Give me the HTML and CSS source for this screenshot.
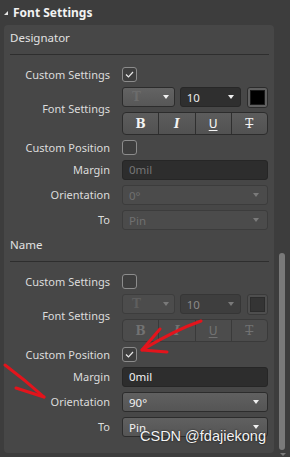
FILE: index.html
```html
<!DOCTYPE html>
<html lang="en">
<head>
  <meta charset="UTF-8" />
  <title>Font Settings</title>
  <link rel="stylesheet" href="styles.css">
</head>
<body>
  <div class="header">
    <span class="caret"></span>
    <span class="header-title">Font Settings</span>
  </div>

  <div class="main">
    <div class="panel">

      <div class="section">
        <div class="section-title">Designator</div>
        <div class="sep"></div>
        <div class="grid">
          <div class="label">Custom Settings</div>
          <div class="ctl"><span class="check"><svg width="9" height="7" viewBox="0 0 9 7"><polyline points="1,3.5 3.5,6 8,1" fill="none" stroke="#e8e8e8" stroke-width="1.2"/></svg></span></div>

          <div class="label span2">Font Settings</div>
          <div class="ctl font-row">
            <div class="dd font-dd"><span class="t-glyph">T</span><span class="arrow"></span></div>
            <div class="dd size-dd"><span>10</span><span class="arrow"></span></div>
            <div class="color-box"><span class="swatch"></span></div>
          </div>
          <div class="ctl biut">
            <span class="seg b">B</span>
            <span class="seg i">I</span>
            <span class="seg u">U</span>
            <span class="seg s">T</span>
          </div>

          <div class="label">Custom Position</div>
          <div class="ctl"><span class="check"></span></div>

          <div class="label">Margin</div>
          <div class="ctl"><div class="input muted">0mil</div></div>

          <div class="label">Orientation</div>
          <div class="ctl"><div class="select disabled"><span>0°</span><span class="arrow"></span></div></div>

          <div class="label">To</div>
          <div class="ctl"><div class="select disabled"><span>Pin</span><span class="arrow"></span></div></div>
        </div>
      </div>

      <div class="section">
        <div class="section-title">Name</div>
        <div class="sep"></div>
        <div class="grid">
          <div class="label">Custom Settings</div>
          <div class="ctl"><span class="check"></span></div>

          <div class="label span2">Font Settings</div>
          <div class="ctl font-row off">
            <div class="dd font-dd"><span class="t-glyph">T</span><span class="arrow"></span></div>
            <div class="dd size-dd"><span>10</span><span class="arrow"></span></div>
            <div class="color-box"><span class="swatch"></span></div>
          </div>
          <div class="ctl biut off">
            <span class="seg b">B</span>
            <span class="seg i">I</span>
            <span class="seg u">U</span>
            <span class="seg s">T</span>
          </div>

          <div class="label">Custom Position</div>
          <div class="ctl"><span class="check"><svg width="9" height="7" viewBox="0 0 9 7"><polyline points="1,3.5 3.5,6 8,1" fill="none" stroke="#e8e8e8" stroke-width="1.2"/></svg></span></div>

          <div class="label">Margin</div>
          <div class="ctl"><div class="input">0mil</div></div>

          <div class="label">Orientation</div>
          <div class="ctl"><div class="select"><span>90°</span><span class="arrow"></span></div></div>

          <div class="label">To</div>
          <div class="ctl"><div class="select"><span>Pin</span><span class="arrow"></span></div></div>
        </div>
      </div>

    </div>

    <div class="scrollbar">
      <div class="thumb"></div>
      <div class="scroll-arrow"></div>
    </div>
  </div>

  <!-- hand-drawn annotations -->
  <svg class="marks" width="290" height="457" viewBox="0 0 290 457">
    <g fill="none" stroke="#e3141c" stroke-width="3" stroke-linecap="round" stroke-linejoin="round">
      <path d="M201 321 Q175 330 142 350"/>
      <path d="M160 329 L142 350 L167 352"/>
      <path d="M5 365 Q25 380 44 397"/>
      <path d="M16 388 L44 397"/>
    </g>
  </svg>
  <div class="watermark">CSDN @fdajiekong</div>
</body>
</html>
```

FILE: styles.css
```css
* { box-sizing: border-box; }

body {
  margin: 0;
  width: 290px;
  height: 457px;
  overflow: hidden;
  background: #3d3d3d;
  color: #dcdcdc;
  font-family: "Noto Sans", sans-serif;
  font-size: 11px;
  position: relative;
}

.header {
  height: 25px;
  display: flex;
  align-items: center;
  padding-left: 4px;
  gap: 5px;
}

.caret {
  width: 0;
  height: 0;
  border-left: 4px solid transparent;
  border-bottom: 4px solid #e6e6e6;
  margin-top: 1px;
}

.header-title {
  font-weight: bold;
  font-size: 12px;
  color: #f2f2f2;
}

.main {
  display: flex;
}

.panel {
  margin-left: 4px;
  width: 270px;
  height: 428px;
  background: #474747;
  border-radius: 4px;
  padding: 5px 5px 0 6px;
}

.section + .section { margin-top: 7px; }

.section-title {
  height: 16px;
  line-height: 16px;
  font-size: 11.5px;
  color: #e2e2e2;
}

.sep {
  margin-top: 8px;
  height: 1px;
  background: #2e2e2e;
}

.grid {
  margin-top: 12px;
  display: grid;
  grid-template-columns: 100px 146px;
  grid-template-rows: 15px 20px 23px 15px 20px 20px 20px;
  column-gap: 12px;
  row-gap: 5px;
}

.label {
  text-align: right;
  align-self: center;
  white-space: nowrap;
  line-height: 14px;
}

.label.span2 {
  grid-row: span 2;
  padding-bottom: 5px;
}

.ctl { display: flex; }

.check {
  width: 15px;
  height: 15px;
  border: 1px solid #8c8c8c;
  border-radius: 3px;
  background: #3e3e3e;
  display: flex;
  align-items: center;
  justify-content: center;
}

.font-row { gap: 5px; }

.dd, .select {
  height: 20px;
  border: 1px solid #2c2c2c;
  border-radius: 3px;
  display: flex;
  align-items: center;
  justify-content: space-between;
  padding: 0 5px 0 6px;
}

.arrow {
  width: 0;
  height: 0;
  border-left: 3.5px solid transparent;
  border-right: 3.5px solid transparent;
  border-top: 4px solid #f0f0f0;
}

.font-dd {
  width: 53px;
  background: linear-gradient(#636363, #575757);
  padding-left: 9px;
}

.t-glyph {
  font-family: "DejaVu Serif", serif;
  font-weight: bold;
  font-size: 12px;
  color: #6c6c6c;
}

.size-dd {
  width: 62px;
  margin-left: 0;
  background: #2f2f2f;
  border-color: #272727;
  color: #eaeaea;
  font-size: 11.5px;
  padding-right: 6px;
}

.color-box {
  width: 21px;
  height: 21px;
  margin-left: 1px;
  border: 1px solid #2c2c2c;
  border-radius: 3px;
  background: #606060;
  padding: 2px;
}

.swatch {
  display: block;
  width: 100%;
  height: 100%;
  background: #000;
  border: 1px solid #1c1c1c;
}

.biut {
  height: 23px;
  border: 1px solid #2c2c2c;
  border-radius: 4px;
  background: linear-gradient(#5c5c5c, #525252);
  overflow: hidden;
}

.seg {
  flex: 1;
  display: flex;
  align-items: center;
  justify-content: center;
  color: #f4f4f4;
  font-family: "DejaVu Serif", serif;
  font-weight: bold;
  font-size: 12px;
}

.seg + .seg { border-left: 1px solid #2f2f2f; }
.seg.i { font-style: italic; }
.seg.u { font-family: "DejaVu Sans", sans-serif; font-weight: normal; text-decoration: underline; text-underline-offset: 2px; }
.seg.s { text-decoration: line-through; font-weight: normal; }

.input {
  width: 146px;
  height: 20px;
  border: 1px solid #262626;
  border-radius: 3px;
  background: #2d2d2d;
  padding-left: 6px;
  line-height: 18px;
  color: #f2f2f2;
  font-size: 11.5px;
}

.input.muted { color: #767676; }

.select {
  width: 146px;
  background: linear-gradient(#606060, #555555);
  color: #f2f2f2;
  font-size: 11.5px;
  padding-right: 8px;
}

.select.disabled {
  background: #4b4b4b;
  border-color: #3c3c3c;
  color: #707070;
}

.select.disabled .arrow { border-top-color: #7a7a7a; }

/* disabled font row in the Name section */
.off .font-dd { background: #4c4c4c; border-color: #3d3d3d; }
.off .t-glyph { color: #5e5e5e; }
.off .arrow { border-top-color: #7a7a7a; }
.off .size-dd { background: #3e3e3e; border-color: #363636; color: #8a8a8a; }
.off.font-row .color-box { background: #4e4e4e; border-color: #3a3a3a; }
.off .swatch { background: #343434; border-color: #2c2c2c; }
.biut.off { background: #4c4c4c; border-color: #3a3a3a; }
.biut.off .seg { color: #727272; }
.biut.off .seg + .seg { border-left-color: #3a3a3a; }

.scrollbar {
  width: 16px;
  position: relative;
}

.thumb {
  margin: 228px 0 0 5px;
  width: 6px;
  height: 197px;
  border-radius: 3px;
  background: #7a7a7a;
}

.scroll-arrow {
  margin: 3px 0 0 6px;
  width: 0;
  height: 0;
  border-left: 3px solid transparent;
  border-right: 3px solid transparent;
  border-top: 3px solid #7a7a7a;
}

.marks {
  position: absolute;
  left: 0;
  top: 0;
  pointer-events: none;
}

.watermark {
  position: absolute;
  left: 140px;
  top: 428px;
  font-family: "Liberation Sans", Arial, sans-serif;
  font-size: 14.5px;
  color: #f4f4f4;
  text-shadow: 0 0 2px #222, 0 0 1px #222;
}
```
